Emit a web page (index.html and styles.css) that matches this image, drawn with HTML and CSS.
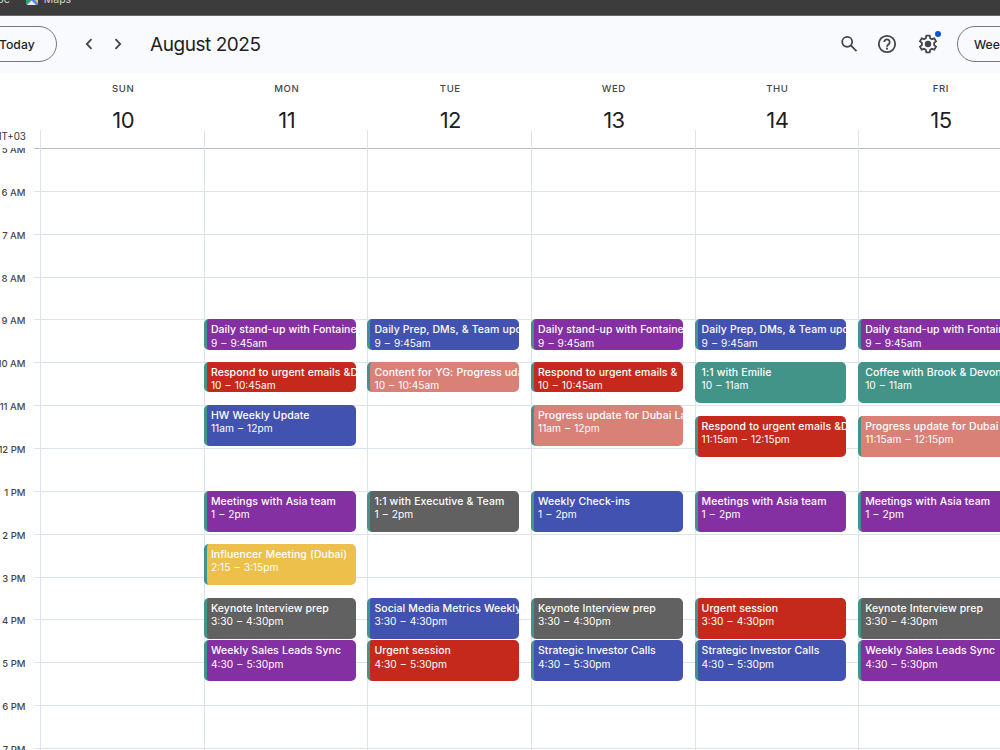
FILE: index.html
```html
<!DOCTYPE html>
<html lang="en">
<head>
    <meta charset="UTF-8">
    <meta name="viewport" content="width=device-width, initial-scale=1.0">
    <title>Calendar - August 2025</title>
    <link rel="stylesheet" href="styles.css">
</head>
<body>
    <div class="bookmarks">
        <span>Tube</span>
        <svg class="maps-icon" width="12" height="12" viewBox="0 0 12 12">
            <rect width="12" height="12" rx="2" fill="#4a8af4"/>
            <path d="M0 0h5v7L0 12z" fill="#34a853"/>
            <path d="M12 1v10L7 5z" fill="#f4c430"/>
            <path d="M1 12L6 7l5 5z" fill="#e8eaed"/>
            <path d="M6 5l6 6v1h-2L5 7z" fill="#4a8af4"/>
        </svg>
        <span>Maps</span>
    </div>

    <header class="toolbar">
        <button class="pill today">Today</button>
        <button class="icon-btn prev" aria-label="Previous week">
            <svg width="8" height="12" viewBox="0 0 8 12"><path d="M6.5 1.2L1.8 6l4.7 4.8"/></svg>
        </button>
        <button class="icon-btn next" aria-label="Next week">
            <svg width="8" height="12" viewBox="0 0 8 12"><path d="M1.5 1.2L6.2 6l-4.7 4.8"/></svg>
        </button>
        <h1>August 2025</h1>
        <div class="actions">
            <button class="icon-btn search" aria-label="Search">
                <svg width="18" height="18" viewBox="0 0 18 18"><circle cx="7.2" cy="6.8" r="5"/><path d="M10.8 10.4l5.7 5.7"/></svg>
            </button>
            <button class="icon-btn" aria-label="Help">
                <svg width="20" height="20" viewBox="0 0 20 20"><circle cx="10" cy="10" r="8.2"/><path d="M7.3 8.1a2.7 2.7 0 1 1 4.6 1.9C10.9 10.9 10 11.3 10 12.7"/><circle class="solid" cx="10" cy="14.7" r="1.1"/></svg>
            </button>
            <button class="icon-btn settings" aria-label="Settings">
                <svg width="20" height="20" viewBox="0 0 20 20"><path d="M8.3 1.7h3.4l.5 2.5 1.7 1 2.4-.8 1.7 2.9-1.9 1.700v2l1.900 1.700-1.700 2.900-2.400-.8-1.700 1-.5 2.500H8.300l-.5-2.500-1.700-1-2.400.8L2 12.700 3.900 11V9L2 7.300l1.700-2.900 2.400.8 1.700-1z"/><circle class="solid" cx="10" cy="10" r="3.2"/></svg>
                <span class="badge"></span>
            </button>
            <button class="pill view">Week</button>
        </div>
    </header>

    <div class="day-heads">
        <div class="zone">GMT+03</div>
        <div class="day-head"><span>SUN</span><b>10</b></div>
        <div class="day-head"><span>MON</span><b>11</b></div>
        <div class="day-head"><span>TUE</span><b>12</b></div>
        <div class="day-head"><span>WED</span><b>13</b></div>
        <div class="day-head"><span>THU</span><b>14</b></div>
        <div class="day-head"><span>FRI</span><b>15</b></div>
    </div>

    <main class="week">
        <div class="hours">
            <div class="hour"><span>5 AM</span></div>
            <div class="hour"><span>6 AM</span></div>
            <div class="hour"><span>7 AM</span></div>
            <div class="hour"><span>8 AM</span></div>
            <div class="hour"><span>9 AM</span></div>
            <div class="hour"><span>10 AM</span></div>
            <div class="hour"><span>11 AM</span></div>
            <div class="hour"><span>12 PM</span></div>
            <div class="hour"><span>1 PM</span></div>
            <div class="hour"><span>2 PM</span></div>
            <div class="hour"><span>3 PM</span></div>
            <div class="hour"><span>4 PM</span></div>
            <div class="hour"><span>5 PM</span></div>
            <div class="hour"><span>6 PM</span></div>
            <div class="hour"><span>7 PM</span></div>
        </div>

        <div class="day sun"></div>

        <div class="day mon">
            <div class="event at-0900 short grape"><b>Daily stand-up with Fontaine</b><span>9 – 9:45am</span></div>
            <div class="event at-1000 short tomato"><b>Respond to urgent emails &amp;DMs</b><span>10 – 10:45am</span></div>
            <div class="event at-1100 blueberry"><b>HW Weekly Update</b><span>11am – 12pm</span></div>
            <div class="event at-1300 grape"><b>Meetings with Asia team</b><span>1 – 2pm</span></div>
            <div class="event at-1415 banana"><b>Influencer Meeting (Dubai)</b><span>2:15 – 3:15pm</span></div>
            <div class="event at-1530 graphite"><b>Keynote Interview prep</b><span>3:30 – 4:30pm</span></div>
            <div class="event at-1630 grape"><b>Weekly Sales Leads Sync</b><span>4:30 – 5:30pm</span></div>
        </div>

        <div class="day tue">
            <div class="event at-0900 short blueberry"><b>Daily Prep, DMs, &amp; Team updates</b><span>9 – 9:45am</span></div>
            <div class="event at-1000 short flamingo"><b>Content for YG: Progress udate</b><span>10 – 10:45am</span></div>
            <div class="event at-1300 graphite"><b>1:1 with Executive &amp; Team</b><span>1 – 2pm</span></div>
            <div class="event at-1530 blueberry"><b>Social Media Metrics Weekly</b><span>3:30 – 4:30pm</span></div>
            <div class="event at-1630 tomato"><b>Urgent session</b><span>4:30 – 5:30pm</span></div>
        </div>

        <div class="day wed">
            <div class="event at-0900 short grape"><b>Daily stand-up with Fontaine</b><span>9 – 9:45am</span></div>
            <div class="event at-1000 short tomato"><b>Respond to urgent emails &amp;</b><span>10 – 10:45am</span></div>
            <div class="event at-1100 flamingo"><b>Progress update for Dubai Launch</b><span>11am – 12pm</span></div>
            <div class="event at-1300 blueberry"><b>Weekly Check-ins</b><span>1 – 2pm</span></div>
            <div class="event at-1530 graphite"><b>Keynote Interview prep</b><span>3:30 – 4:30pm</span></div>
            <div class="event at-1630 blueberry"><b>Strategic Investor Calls</b><span>4:30 – 5:30pm</span></div>
        </div>

        <div class="day thu">
            <div class="event at-0900 short blueberry"><b>Daily Prep, DMs, &amp; Team updates</b><span>9 – 9:45am</span></div>
            <div class="event at-1000 teal"><b>1:1 with Emilie</b><span>10 – 11am</span></div>
            <div class="event at-1115 tomato"><b>Respond to urgent emails &amp;DMs</b><span>11:15am – 12:15pm</span></div>
            <div class="event at-1300 grape"><b>Meetings with Asia team</b><span>1 – 2pm</span></div>
            <div class="event at-1530 tomato"><b>Urgent session</b><span>3:30 – 4:30pm</span></div>
            <div class="event at-1630 blueberry"><b>Strategic Investor Calls</b><span>4:30 – 5:30pm</span></div>
        </div>

        <div class="day fri">
            <div class="event at-0900 short grape"><b>Daily stand-up with Fontaine</b><span>9 – 9:45am</span></div>
            <div class="event at-1000 teal"><b>Coffee with Brook &amp; Devon</b><span>10 – 11am</span></div>
            <div class="event at-1115 flamingo"><b>Progress update for Dubai</b><span>11:15am – 12:15pm</span></div>
            <div class="event at-1300 grape"><b>Meetings with Asia team</b><span>1 – 2pm</span></div>
            <div class="event at-1530 graphite"><b>Keynote Interview prep</b><span>3:30 – 4:30pm</span></div>
            <div class="event at-1630 grape"><b>Weekly Sales Leads Sync</b><span>4:30 – 5:30pm</span></div>
        </div>
    </main>
</body>
</html>
```
FILE: styles.css
```css
* {
    box-sizing: border-box;
}
body {
    margin: 0;
    width: 1000px;
    height: 750px;
    overflow: hidden;
    display: flex;
    flex-direction: column;
    background: #fff;
    color: #1f1f1f;
    font-family: Inter, "Liberation Sans", sans-serif;
}

/* browser bookmarks strip */
.bookmarks {
    flex: none;
    height: 16px;
    display: flex;
    align-items: flex-start;
    overflow: hidden;
    background: #3c3c3c;
    border-bottom: 1px solid #666;
    color: #d5d5d5;
    font-size: 10.5px;
    line-height: 13px;
}
.bookmarks span {
    margin-top: -7px;
}
.bookmarks span:first-child {
    margin-left: -15px;
}
.maps-icon {
    margin: -7px 6px 0 16px;
}

/* toolbar */
.toolbar {
    flex: none;
    height: 57px;
    display: flex;
    align-items: center;
    padding-bottom: 1px;
    background: #f8fafe;
}
button {
    border: none;
    background: none;
    padding: 0;
    font-family: inherit;
    color: inherit;
}
.pill {
    height: 36px;
    border: 1px solid #747775;
    border-radius: 18px;
    font-size: 12.2px;
    font-weight: 500;
    text-align: left;
}
.today {
    width: 77px;
    margin-left: -20px;
    padding-left: 18px;
}
.icon-btn {
    display: flex;
    position: relative;
}
.icon-btn svg {
    fill: none;
    stroke: #444746;
    stroke-width: 1.8;
}
.icon-btn svg .solid {
    fill: #444746;
    stroke: none;
}
.prev {
    margin-left: 28px;
}
.next {
    margin-left: 21px;
}
.search {
    margin-right: -1px;
}
h1 {
    margin: 2px 0 0 28px;
    font-size: 19px;
    line-height: 24px;
    font-weight: 400;
    letter-spacing: -0.45px;
}
.actions {
    margin-left: auto;
    display: flex;
    align-items: center;
    gap: 20px;
}
.badge {
    position: absolute;
    top: -3px;
    right: -3px;
    width: 6px;
    height: 6px;
    border-radius: 50%;
    background: #0b57d0;
}
.settings {
    margin-left: 1px;
}
.view {
    width: 90px;
    margin: 0 -47px 0 -1px;
    padding-left: 16px;
}

/* day names and numbers */
.day-heads {
    flex: none;
    height: 75px;
    display: grid;
    grid-template-columns: 40.4px repeat(6, 163.55px);
}
.zone {
    align-self: end;
    justify-self: end;
    margin: 0 14.5px 5px 0;
    font-size: 9.8px;
    line-height: 13px;
    color: #333635;
}
.day-head {
    display: flex;
    flex-direction: column;
    align-items: center;
    padding: 9px 0 0 2px;
    background: linear-gradient(#dde3ea, #dde3ea) 0 100% / 1px 18px no-repeat;
}
.day-head span {
    font-size: 9.6px;
    line-height: 13px;
    letter-spacing: 0.6px;
    font-weight: 500;
    color: #444746;
}
.day-head b {
    margin-top: 11px;
    font-size: 22px;
    line-height: 28px;
    letter-spacing: -0.6px;
    font-weight: 400;
}

/* hour grid, one row per hour */
.week {
    flex: 1;
    min-height: 0;
    overflow: hidden;
    display: grid;
    grid-template-columns: 40.4px repeat(6, 163.55px);
    grid-template-rows: 643.05px;
}
.hours {
    grid-area: 1 / 1 / 2 / -1;
    display: grid;
    grid-template-rows: repeat(15, 42.87px);
}
.hour {
    margin-left: 34px;
    border-top: 1px solid #dde3ea;
}
.hour:first-child {
    border-top-color: #b9bcc2;
}
.hour span {
    display: block;
    width: 60px;
    margin: -6px 0 0 -68.5px;
    text-align: right;
    font-size: 9.5px;
    line-height: 13px;
    font-weight: 500;
    color: #444746;
}
.day {
    grid-row: 1;
    display: grid;
    grid-template-rows: repeat(60, 10.7175px);
    border-left: 1px solid #dde3ea;
}
.sun { grid-column: 2; }
.mon { grid-column: 3; }
.tue { grid-column: 4; }
.wed { grid-column: 5; }
.thu { grid-column: 6; }
.fri { grid-column: 7; }

/* events, placed on quarter-hour rows */
.event {
    grid-row-end: span 4;
    margin: 0 11.7px 1.8px -1px;
    padding: 4px 0 0 4px;
    border-left: 3px solid #429488;
    border-radius: 5px;
    overflow: hidden;
    white-space: nowrap;
    color: #fff;
    font-size: 10.5px;
    line-height: 13.4px;
}
.event b,
.event span {
    display: block;
}
.event b {
    font-weight: 500;
    letter-spacing: 0.06px;
    word-spacing: 0.2px;
}
.event span {
    font-size: 10.2px;
    word-spacing: 1.2px;
}
.short { grid-row-end: span 3; }
.at-0900 { grid-row-start: 17; }
.at-1000 { grid-row-start: 21; }
.at-1100 { grid-row-start: 25; }
.at-1115 { grid-row-start: 26; }
.at-1300 { grid-row-start: 33; }
.at-1415 { grid-row-start: 38; }
.at-1530 { grid-row-start: 43; }
.at-1630 { grid-row-start: 47; }

.grape { background: #8430a2; }
.tomato { background: #c5291c; }
.blueberry { background: #4252b0; }
.flamingo { background: #d98177; }
.graphite { background: #616161; }
.banana { background: #edc04b; }
.teal { background: #429488; }
```
